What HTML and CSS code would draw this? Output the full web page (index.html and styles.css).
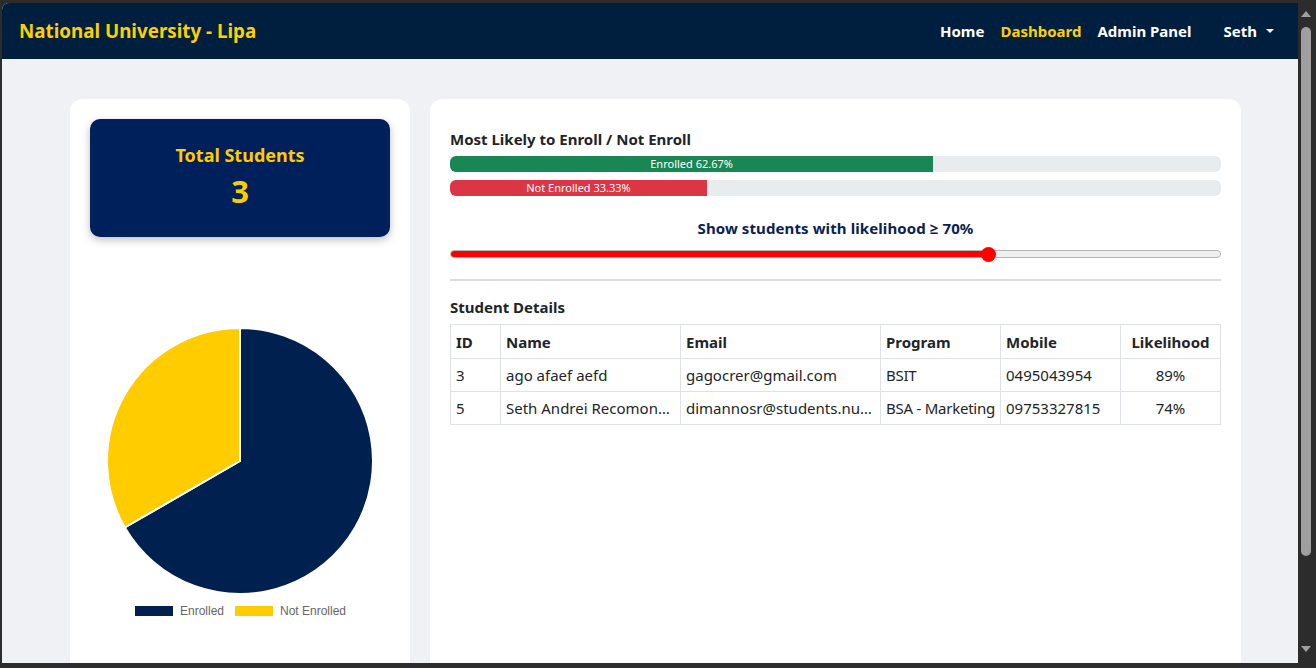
FILE: index.html
```html
<!DOCTYPE html>
<html lang="en">
<head>
<meta charset="utf-8">
<title>Dashboard - National University Lipa</title>
<link rel="stylesheet" href="styles.css">
</head>
<body>
<div class="window">
  <div class="viewport">
    <nav class="navbar">
      <a class="brand" href="#">National University - Lipa</a>
      <div class="nav-links">
        <a class="nav-link" href="#">Home</a>
        <a class="nav-link active" href="#">Dashboard</a>
        <a class="nav-link" href="#">Admin Panel</a>
        <a class="nav-link user" href="#">Seth <span class="caret"></span></a>
      </div>
    </nav>
    <main class="main">
      <section class="card card-left">
        <div class="total-box">
          <div class="total-label">Total Students</div>
          <div class="total-value">3</div>
        </div>
        <svg class="pie" width="300" height="380" viewBox="0 0 300 380">
          <path d="M150,209 L150,76 A133,133 0 1 1 34.82,275.5 Z" fill="#00204f" stroke="#fff" stroke-width="2"/>
          <path d="M150,209 L34.82,275.5 A133,133 0 0 1 150,76 Z" fill="#ffcc00" stroke="#fff" stroke-width="2"/>
          <rect x="45" y="354" width="38" height="10" fill="#00204f"/>
          <text x="90" y="363" class="legend-text">Enrolled</text>
          <rect x="145" y="354" width="38" height="10" fill="#ffcc00"/>
          <text x="190" y="363" class="legend-text">Not Enrolled</text>
        </svg>
      </section>
      <section class="card card-right">
        <h2 class="section-title">Most Likely to Enroll / Not Enroll</h2>
        <div class="progress">
          <div class="progress-bar bar-green" style="width:62.67%">Enrolled 62.67%</div>
        </div>
        <div class="progress">
          <div class="progress-bar bar-red" style="width:33.33%">Not Enrolled 33.33%</div>
        </div>
        <div class="slider-label">Show students with likelihood ≥ 70%</div>
        <div class="slider">
          <div class="slider-track">
            <div class="slider-fill" style="width:69.8%"></div>
          </div>
          <div class="slider-thumb" style="left:69.8%"></div>
        </div>
        <hr class="divider">
        <h2 class="section-title details-title">Student Details</h2>
        <table class="students">
          <colgroup>
            <col class="c-id"><col class="c-name"><col class="c-email"><col class="c-prog"><col class="c-mob"><col class="c-like">
          </colgroup>
          <thead>
            <tr><th>ID</th><th>Name</th><th>Email</th><th>Program</th><th>Mobile</th><th class="center">Likelihood</th></tr>
          </thead>
          <tbody>
            <tr><td>3</td><td class="ellipsis">ago afaef aefd</td><td class="ellipsis">gagocrer@gmail.com</td><td class="tight">BSIT</td><td>0495043954</td><td class="center">89%</td></tr>
            <tr><td>5</td><td class="ellipsis">Seth Andrei Recomono Dimanno</td><td class="ellipsis">dimannosr@students.nu-lipa.edu.ph</td><td class="tight">BSA - Marketing</td><td>09753327815</td><td class="center">74%</td></tr>
          </tbody>
        </table>
      </section>
    </main>
  </div>
  <div class="scrollbar">
    <span class="arrow arrow-up"></span>
    <span class="thumb"></span>
    <span class="arrow arrow-down"></span>
  </div>
</div>
</body>
</html>
```
FILE: styles.css
```css
* { box-sizing: border-box; }
html, body { margin: 0; padding: 0; }
body {
  width: 1316px;
  height: 668px;
  overflow: hidden;
  background: #2c2c2c;
  font-family: "Noto Sans", "Open Sans", sans-serif;
  color: #212529;
}
.window {
  display: flex;
  height: 668px;
  padding: 3px 0 5px 2px;
}
.viewport {
  flex: 1;
  display: flex;
  flex-direction: column;
  background: #eff1f5;
  border-radius: 7px 0 0 0;
  overflow: hidden;
}
.navbar {
  flex: none;
  height: 56px;
  background: #001f3f;
  display: flex;
  align-items: center;
  justify-content: space-between;
  padding: 0 24px 0 17px;
}
.brand {
  color: #ffd000;
  font-weight: 700;
  font-size: 18.8px;
  text-decoration: none;
}
.nav-links { display: flex; align-items: center; }
.nav-link {
  color: #fff;
  font-weight: 700;
  font-size: 15px;
  text-decoration: none;
  padding: 8px 8px;
}
.nav-link.active { color: #ffd000; }
.nav-link.user { margin-left: 16px; padding-right: 0; display: flex; align-items: center; }
.caret {
  display: inline-block;
  margin-left: 9px;
  border-top: 4px solid #fff;
  border-left: 4px solid transparent;
  border-right: 4px solid transparent;
}
.main {
  flex: 1;
  display: flex;
  align-items: stretch;
  gap: 20px;
  padding: 40px 57px 0 68px;
}
.card {
  background: #fff;
  border-radius: 12px;
  height: 640px;
}
.card-left {
  width: 340px;
  flex: none;
  padding: 20px;
}
.total-box {
  height: 118px;
  background: #00205b;
  border-radius: 10px;
  box-shadow: 0 3px 8px rgba(0, 0, 0, 0.25);
  display: flex;
  flex-direction: column;
  align-items: center;
  justify-content: center;
  color: #ffcc00;
  font-weight: 700;
}
.total-label { font-size: 18px; line-height: 24px; margin-top: -2px; }
.total-value { font-size: 31px; line-height: 40px; margin-top: 4px; }
.pie { display: block; margin-top: 15px; }
.legend-text {
  font-family: "Liberation Sans", Arial, sans-serif;
  font-size: 12px;
  fill: #666;
}
.card-right {
  flex: 1;
  padding: 28px 20px 20px;
}
.section-title {
  margin: 0;
  font-size: 15px;
  line-height: 24px;
  font-weight: 700;
}
.progress {
  height: 16px;
  background: #e9ecef;
  border-radius: 6px;
  overflow: hidden;
  margin-top: 5px;
  display: flex;
}
.progress + .progress { margin-top: 8px; }
.progress-bar {
  color: #fff;
  font-size: 11px;
  line-height: 16px;
  text-align: center;
  white-space: nowrap;
}
.bar-green { background: #198754; }
.bar-red { background: #dc3545; }
.slider-label {
  margin-top: 20px;
  text-align: center;
  font-size: 15px;
  line-height: 24px;
  font-weight: 700;
  color: #0b2250;
  letter-spacing: 0.1px;
}
.slider {
  position: relative;
  height: 16px;
  margin-top: 6px;
  display: flex;
  align-items: center;
}
.slider-track {
  flex: 1;
  height: 8px;
  border-radius: 4px;
  background: #efefef;
  border: 1px solid #b5b5b5;
  overflow: hidden;
  display: flex;
}
.slider-fill { background: #ff0000; height: 100%; }
.slider-thumb {
  position: absolute;
  top: 1px;
  width: 15px;
  height: 15px;
  margin-left: -7px;
  border-radius: 50%;
  background: #ff0000;
}
.divider {
  border: 0;
  border-top: 2px solid #dcdcdc;
  margin: 17px 0 14px;
}
.students {
  margin-top: 5px;
  width: 100%;
  table-layout: fixed;
  border-collapse: collapse;
  font-size: 15px;
}
.c-id { width: 50px; }
.c-name { width: 180px; }
.c-email { width: 200px; }
.c-prog { width: 120px; }
.c-mob { width: 120px; }
.students th, .students td {
  border: 1px solid #dee2e6;
  padding: 0 5px;
  text-align: left;
  height: 33px;
  white-space: nowrap;
}
.students th { height: 34px; font-weight: 700; }
.students .center { text-align: center; }
.ellipsis { overflow: hidden; text-overflow: ellipsis; }
.students td.tight { padding-right: 0; letter-spacing: -0.25px; overflow: hidden; }
.scrollbar {
  width: 18px;
  flex: none;
  position: relative;
  margin-top: -3px;
  margin-bottom: -5px;
}
.thumb {
  position: absolute;
  left: 3px;
  top: 27px;
  width: 10px;
  height: 529px;
  border-radius: 5px;
  background: #9f9f9f;
}
.arrow {
  position: absolute;
  left: 3px;
  width: 0;
  height: 0;
  border-left: 5px solid transparent;
  border-right: 5px solid transparent;
}
.arrow-up { top: 11px; border-bottom: 6px solid #9f9f9f; }
.arrow-down { top: 646px; border-top: 6px solid #9f9f9f; }
```
